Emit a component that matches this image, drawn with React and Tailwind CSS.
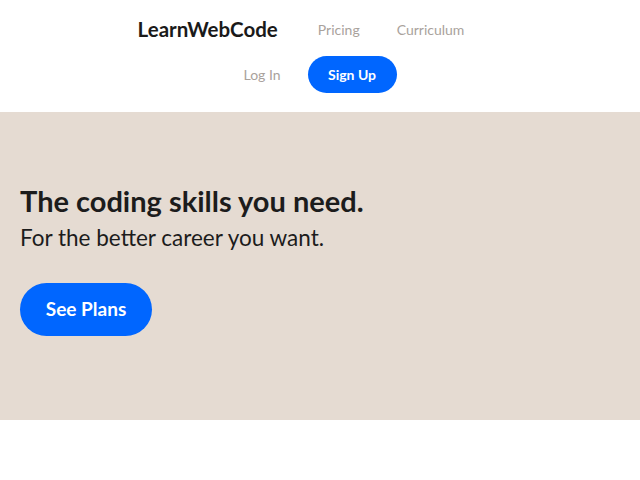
export default function App() {
  return (
    <div className="bg-white min-h-[480px]" style={{ fontFamily: '"Lato", "Open Sans", sans-serif' }}>
      {/* header */}
      <header className="h-[112px] flex flex-col items-center">
        <div className="flex items-center pr-[38px] pt-[15px] h-[44px]">
          <span className="text-[20.5px] font-bold text-[#1a1a1a]">LearnWebCode</span>
          <a className="ml-[40px] text-[14px] text-[#a9a29c]">Pricing</a>
          <a className="ml-[37px] text-[14px] text-[#a9a29c]">Curriculum</a>
        </div>
        <div className="flex items-center gap-[27px] mt-[12px]">
          <a className="text-[14px] text-[#a9a29c]">Log In</a>
          <button className="h-[37px] w-[89px] rounded-full bg-[#0066ff] text-white text-[14px] font-bold">
            Sign Up
          </button>
        </div>
      </header>

      {/* hero */}
      <section className="bg-[#e5dbd2] h-[308px] px-5 pt-[71px]">
        <h1 className="text-[29px] font-bold text-[#1c1c1c] leading-[36px]">The coding skills you need.</h1>
        <p className="text-[22.5px] text-[#1c1c1c] leading-[30px] mt-[4px]">For the better career you want.</p>
        <button className="mt-[30px] h-[53px] w-[132px] rounded-full bg-[#0066ff] text-white text-[19px] font-bold">
          See Plans
        </button>
      </section>
    </div>
  )
}
